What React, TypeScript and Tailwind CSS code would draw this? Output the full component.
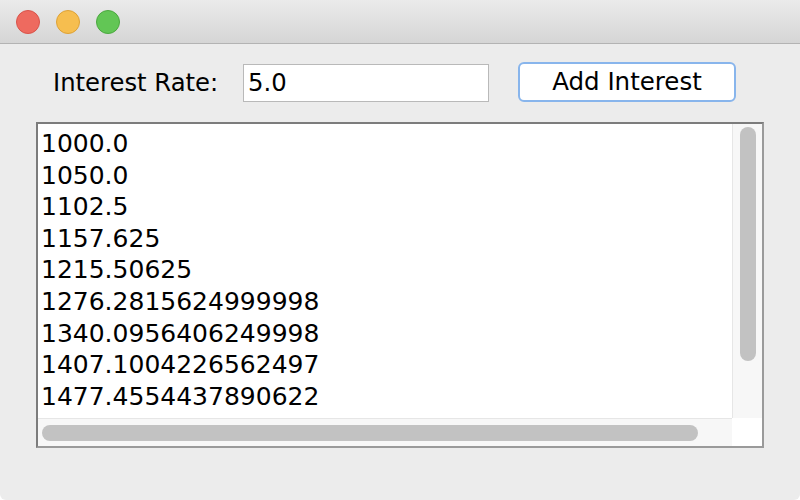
import React from "react";

const rows = [
  "1000.0",
  "1050.0",
  "1102.5",
  "1157.625",
  "1215.50625",
  "1276.2815624999998",
  "1340.0956406249998",
  "1407.1004226562497",
  "1477.4554437890622",
];

export default function App() {
  const font = { fontFamily: '"DejaVu Sans", "Lucida Grande", sans-serif' };
  return (
    <div className="w-[800px] h-[500px] bg-[#ececec] flex flex-col overflow-hidden rounded-b-[6px]" style={font}>
      <div className="h-[44px] shrink-0 bg-gradient-to-b from-[#ebebeb] to-[#d5d5d5] border-b border-[#b3b3b3] flex items-center gap-[16px] pl-[16px]">
        <div className="w-[24px] h-[24px] rounded-full bg-[#ee6a5f] border border-[#d9534a]" />
        <div className="w-[24px] h-[24px] rounded-full bg-[#f6be4f] border border-[#dea236]" />
        <div className="w-[24px] h-[24px] rounded-full bg-[#62c655] border border-[#4ba83f]" />
      </div>
      <div className="flex items-center h-[78px]">
        <div className="ml-[53px] w-[164px] whitespace-nowrap text-[24.3px] text-black leading-none mt-[1px]">Interest Rate:</div>
        <div className="ml-[26px] w-[246px] h-[38px] bg-white border border-[#b9b9b9] flex items-center pl-[4px] text-[24.3px] text-black">
          5.0
        </div>
        <div className="ml-[29px] -mt-[2px] w-[218px] h-[40px] bg-white border-[2px] border-[#88b5ec] rounded-[6px] flex items-center justify-center text-[24.5px] text-black whitespace-nowrap">
          Add Interest
        </div>
      </div>
      <div className="ml-[36px] w-[728px] h-[326px] border-[2px] border-[#7c7c7c] border-r-[#9a9a9a] border-b-[#9a9a9a] bg-white flex flex-col">
        <div className="flex flex-1 min-h-0">
          <div className="flex-1 pl-[3px] pt-[4px] flex flex-col text-[25px] leading-[31.6px] text-black overflow-hidden">
            {rows.map((r) => (
              <div key={r}>{r}</div>
            ))}
          </div>
          <div className="w-[30px] bg-[#f7f7f7] border-l border-[#e6e6e6] flex justify-center pt-[3px]">
            <div className="w-[16px] h-[234px] rounded-full bg-[#c2c2c2]" />
          </div>
        </div>
        <div className="h-[28px] flex shrink-0">
          <div className="flex-1 bg-[#f7f7f7] border-t border-[#e6e6e6] flex items-center pl-[4px]">
            <div className="w-[656px] h-[16px] rounded-full bg-[#c2c2c2]" />
          </div>
          <div className="w-[30px] bg-white" />
        </div>
      </div>
    </div>
  );
}
